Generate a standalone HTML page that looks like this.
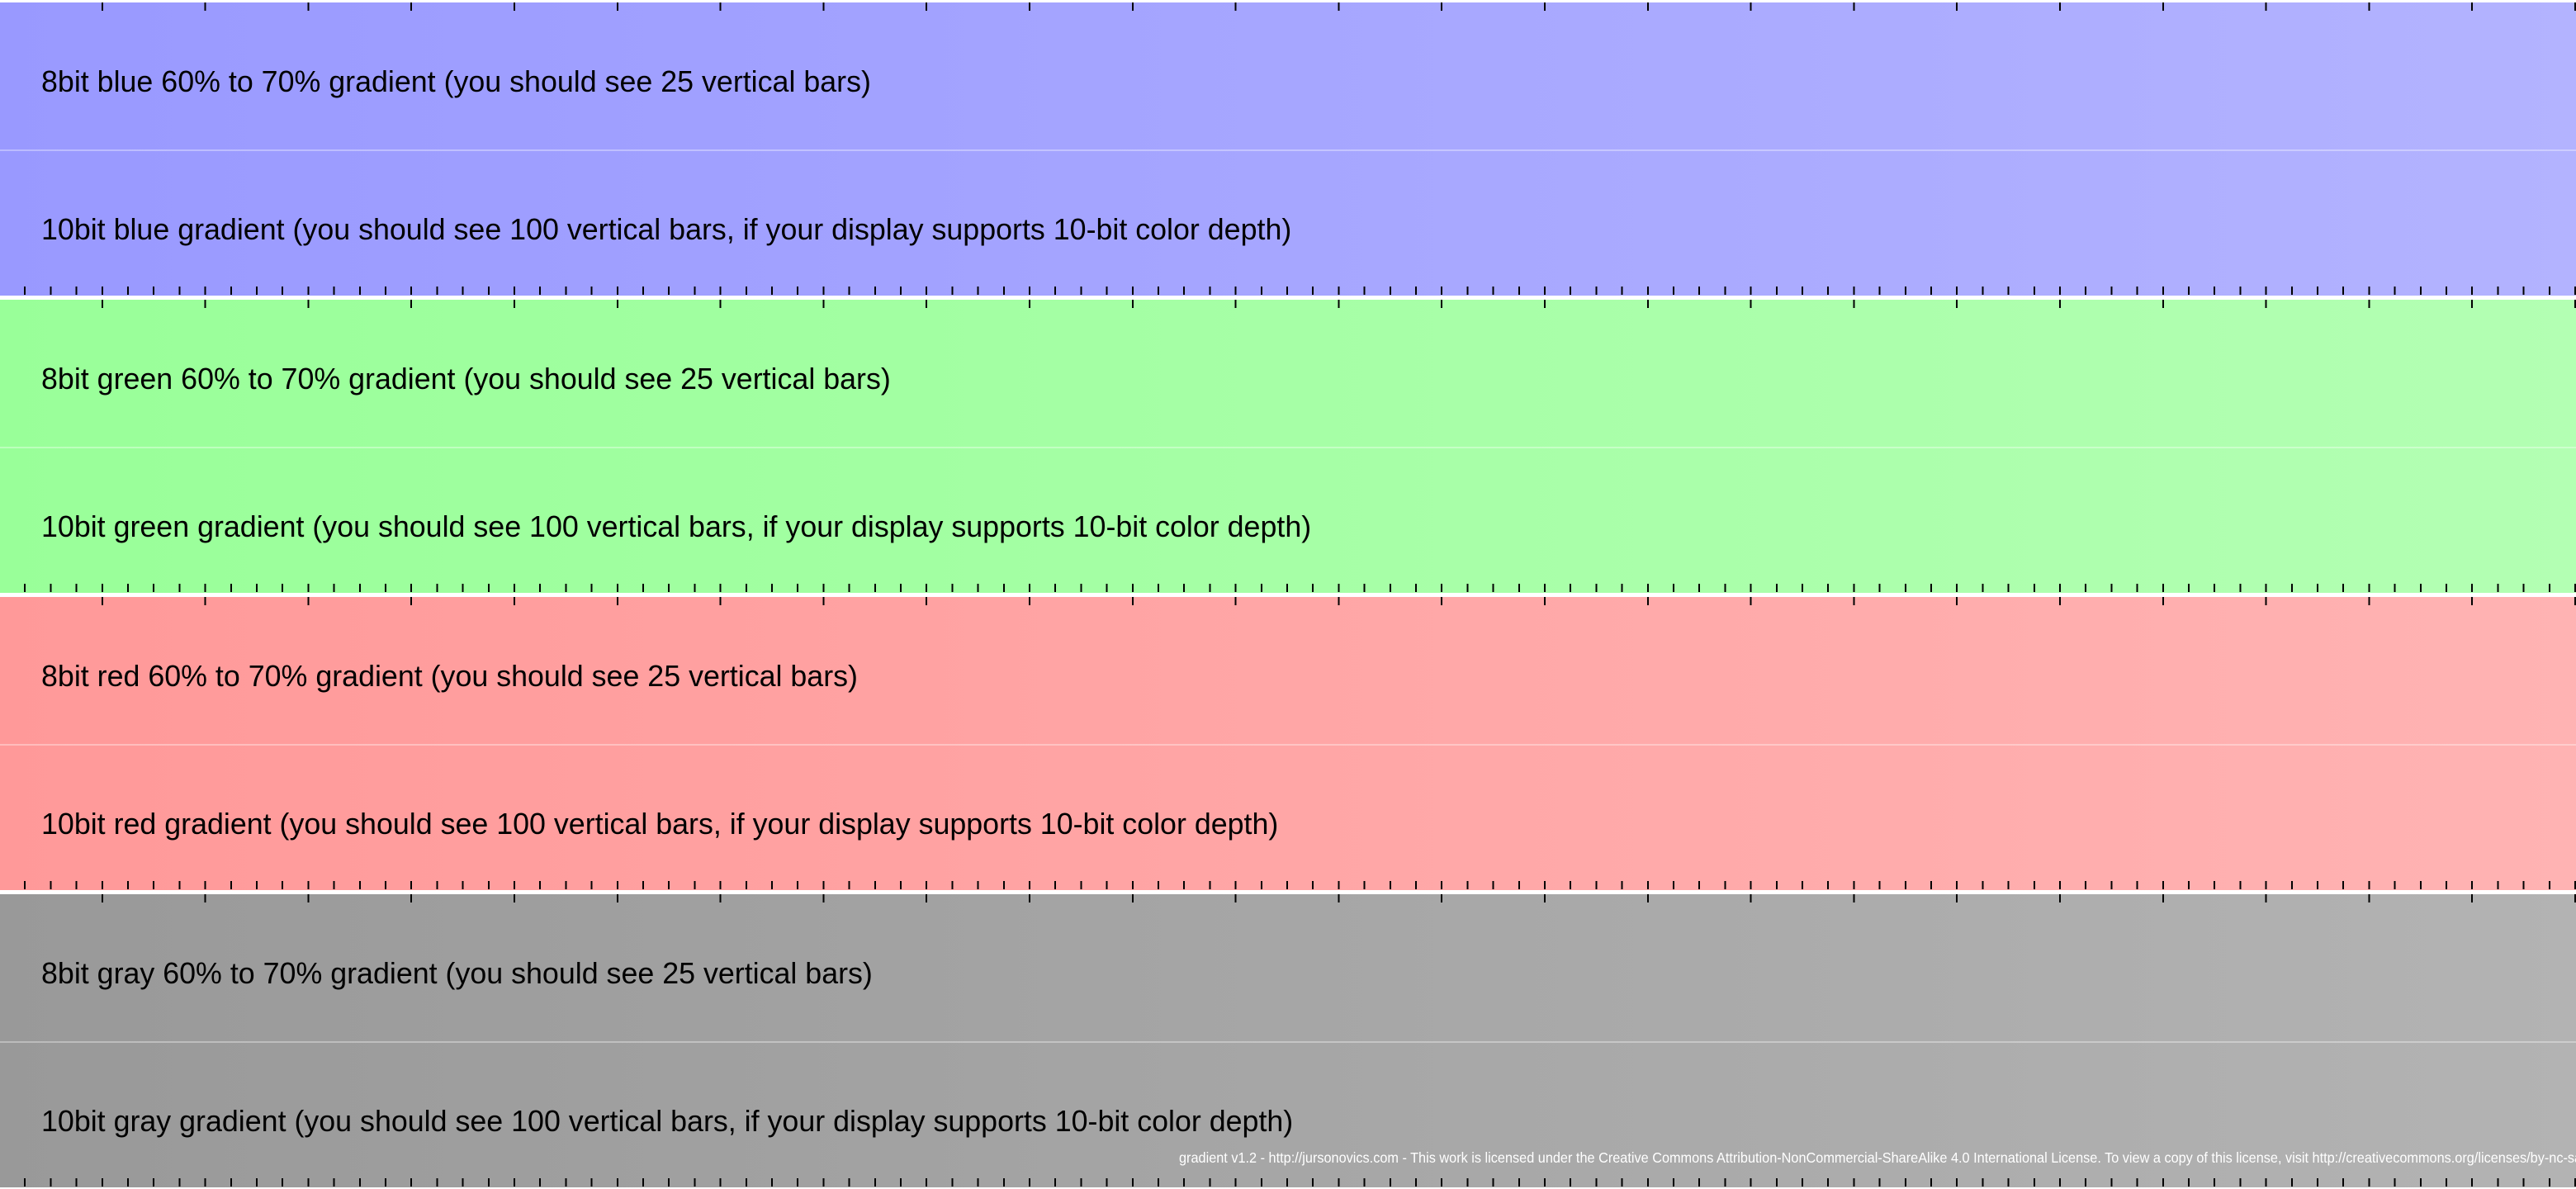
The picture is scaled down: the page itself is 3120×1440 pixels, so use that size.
<!DOCTYPE html>
<html><head><meta charset="utf-8"><style>
html,body{margin:0;padding:0;background:#fff;width:3120px;height:1440px;overflow:hidden;position:relative;font-family:"Liberation Sans",sans-serif}
.b{position:absolute;left:0;width:3120px;height:355px}
.maj{position:absolute;left:0;top:0;width:3120px;height:10px;background:repeating-linear-gradient(to right,transparent 0 122.8px,#000 122.8px 124.8px)}
.min{position:absolute;left:0;top:344px;width:3120px;height:10px;background:repeating-linear-gradient(to right,transparent 0 29.2px,#000 29.2px 31.2px)}
.div{position:absolute;left:0;top:178px;width:3120px;height:2px;background:rgba(255,255,255,0.35)}
.t{position:absolute;left:50px;font-size:35.8px;color:#000;white-space:nowrap;line-height:1}
.t1{top:79px}.t2{top:258px}
.foot{position:absolute;left:1428px;top:1392px;font-size:17.5px;color:#fff;white-space:nowrap;transform:scaleX(0.93);transform-origin:0 0}
</style></head><body>
<div class="b" style="top:3px;background:linear-gradient(to right,rgb(153,153,255),rgb(179,179,255))"><div class="maj"></div><div class="t t1">8bit blue 60% to 70% gradient (you should see 25 vertical bars)</div><div class="div"></div><div class="t t2">10bit blue gradient (you should see 100 vertical bars, if your display supports 10-bit color depth)</div><div class="min"></div></div>
<div class="b" style="top:363px;background:linear-gradient(to right,rgb(153,255,153),rgb(179,255,179))"><div class="maj"></div><div class="t t1">8bit green 60% to 70% gradient (you should see 25 vertical bars)</div><div class="div"></div><div class="t t2">10bit green gradient (you should see 100 vertical bars, if your display supports 10-bit color depth)</div><div class="min"></div></div>
<div class="b" style="top:723px;background:linear-gradient(to right,rgb(255,153,153),rgb(255,179,179))"><div class="maj"></div><div class="t t1">8bit red 60% to 70% gradient (you should see 25 vertical bars)</div><div class="div"></div><div class="t t2">10bit red gradient (you should see 100 vertical bars, if your display supports 10-bit color depth)</div><div class="min"></div></div>
<div class="b" style="top:1083px;background:linear-gradient(to right,rgb(153,153,153),rgb(179,179,179))"><div class="maj"></div><div class="t t1">8bit gray 60% to 70% gradient (you should see 25 vertical bars)</div><div class="div"></div><div class="t t2">10bit gray gradient (you should see 100 vertical bars, if your display supports 10-bit color depth)</div><div class="min"></div></div>
<div class="foot">gradient v1.2 - http://jursonovics.com - This work is licensed under the Creative Commons Attribution-NonCommercial-ShareAlike 4.0 International License. To view a copy of this license, visit http://creativecommons.org/licenses/by-nc-sa/4.0/</div>
</body></html>
